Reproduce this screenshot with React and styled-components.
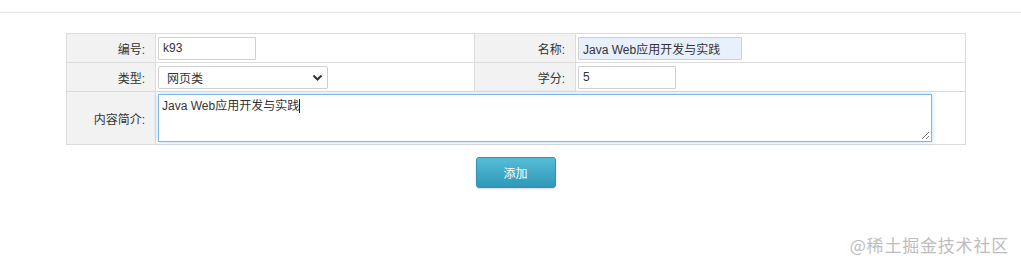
import React from 'react'
import styled, { createGlobalStyle } from 'styled-components'

const GlobalStyle = createGlobalStyle`
  html, body {
    margin: 0;
    padding: 0;
    background: #fff;
  }
  body {
    font-family: "Liberation Sans", "Noto Sans CJK SC", sans-serif;
    font-size: 12px;
    color: #333;
  }
`

const Page = styled.div`
  position: relative;
  width: 1021px;
  height: 270px;
  overflow: hidden;
`

const TopBar = styled.div`
  height: 12px;
  border-bottom: 1px solid #e3e3e3;
`

const Content = styled.div`
  padding: 20px 0 0 66px;
`

const FormTable = styled.table`
  width: 899px;
  border-collapse: collapse;
  table-layout: fixed;

  td {
    border: 1px solid #dcdcdc;
    padding: 0;
  }
`

const Row = styled.tr`
  height: ${(props) => props.$height || 29}px;
`

const LabelCell = styled.td`
  background: #f2f2f2;
  text-align: right;
  padding-right: 10px !important;
  color: #333;
  white-space: nowrap;
`

const ValueCell = styled.td`
  padding-left: 2px !important;
  vertical-align: middle;
`

const TextInput = styled.input`
  box-sizing: border-box;
  width: ${(props) => props.$width}px;
  height: 23px;
  border: 1px solid #cfcfcf;
  border-radius: 1px;
  padding: 0 4px;
  font: 12px "Liberation Sans", "Noto Sans CJK SC", sans-serif;
  color: #333;
  background: ${(props) => (props.$filled ? '#e8f0fe' : '#fff')};
  outline: none;
  display: block;
`

const SelectBox = styled.div`
  position: relative;
  box-sizing: border-box;
  width: 170px;
  height: 23px;
  border: 1px solid #cfcfcf;
  border-radius: 2px;
  display: flex;
  align-items: center;
  padding-left: 8px;
  color: #333;
  background: #fff;
`

const Chevron = styled.svg`
  position: absolute;
  right: 4px;
  top: 7px;
`

const TextArea = styled.div`
  box-sizing: border-box;
  position: relative;
  width: 774px;
  height: 48px;
  margin: 2px 0;
  border: 1px solid #7fb6e3;
  box-shadow: 0 0 5px rgba(100, 165, 225, 0.45);
  padding: 3px 3px;
  color: #333;
  font-size: 12px;
  line-height: 16px;
`

const Caret = styled.span`
  display: inline-block;
  width: 1px;
  height: 14px;
  background: #222;
  vertical-align: -3px;
`

const Grip = styled.svg`
  position: absolute;
  right: 1px;
  bottom: 1px;
`

const Actions = styled.div`
  width: 899px;
  display: flex;
  justify-content: center;
  padding-top: 12px;
`

const AddButton = styled.button`
  width: 80px;
  height: 31px;
  border: 1px solid #2f92b0;
  border-radius: 3px;
  background: linear-gradient(#56bdd6, #2f98b8);
  color: #fff;
  font: 12px "Liberation Sans", "Noto Sans CJK SC", sans-serif;
  box-shadow: 0 1px 2px rgba(0, 0, 0, 0.15);
  padding: 0;
`

const Watermark = styled.div`
  position: absolute;
  right: 12px;
  bottom: 13px;
  font-family: "Noto Sans CJK SC", sans-serif;
  font-size: 17px;
  color: #bdbdbd;
  letter-spacing: 0.8px;
`

const App = () => {
  return (
    <Page>
      <GlobalStyle />
      <TopBar />
      <Content>
        <FormTable>
          <colgroup>
            <col style={{ width: 89 }} />
            <col style={{ width: 319 }} />
            <col style={{ width: 101 }} />
            <col style={{ width: 390 }} />
          </colgroup>
          <tbody>
            <Row>
              <LabelCell>编号:</LabelCell>
              <ValueCell>
                <TextInput $width={98} defaultValue="k93" />
              </ValueCell>
              <LabelCell>名称:</LabelCell>
              <ValueCell>
                <TextInput $width={164} $filled defaultValue="Java Web应用开发与实践" />
              </ValueCell>
            </Row>
            <Row>
              <LabelCell>类型:</LabelCell>
              <ValueCell>
                <SelectBox>
                  网页类
                  <Chevron width="11" height="8" viewBox="0 0 11 8">
                    <path d="M1.5 1.5 L5.5 5.5 L9.5 1.5" fill="none" stroke="#333" strokeWidth="2" />
                  </Chevron>
                </SelectBox>
              </ValueCell>
              <LabelCell>学分:</LabelCell>
              <ValueCell>
                <TextInput $width={98} defaultValue="5" />
              </ValueCell>
            </Row>
            <Row $height={53}>
              <LabelCell>内容简介:</LabelCell>
              <ValueCell colSpan={3}>
                <TextArea>
                  Java Web应用开发与实践<Caret />
                  <Grip width="9" height="9" viewBox="0 0 9 9">
                    <path d="M8 1 L1 8 M8 5 L5 8" stroke="#777" strokeWidth="1" />
                  </Grip>
                </TextArea>
              </ValueCell>
            </Row>
          </tbody>
        </FormTable>
        <Actions>
          <AddButton>添加</AddButton>
        </Actions>
      </Content>
      <Watermark>@稀土掘金技术社区</Watermark>
    </Page>
  )
}

export default App
